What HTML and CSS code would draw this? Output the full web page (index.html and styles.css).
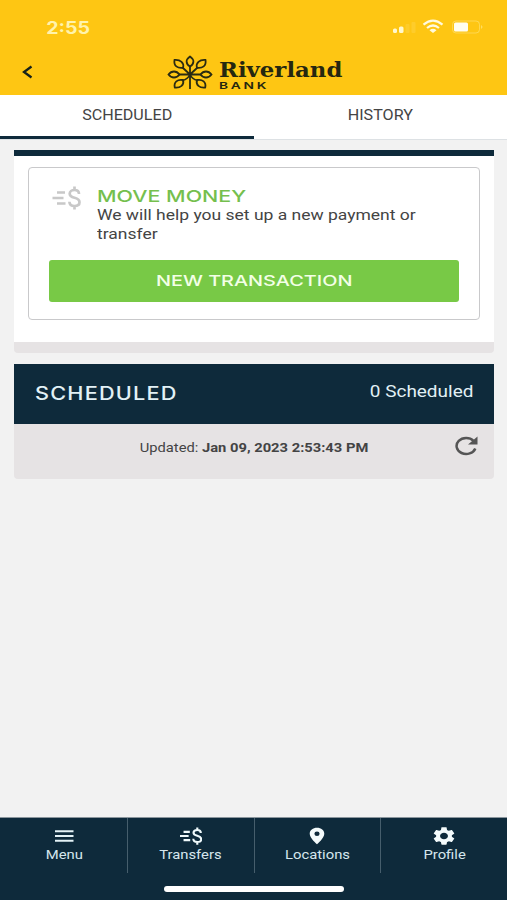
FILE: index.html
```html
<!DOCTYPE html>
<html lang="en">
<head>
<meta charset="utf-8">
<title>Riverland Bank</title>
<link rel="stylesheet" href="styles.css">
</head>
<body>
<svg width="0" height="0" class="defs" aria-hidden="true">
  <symbol id="transfer" viewBox="0 0 28 24">
    <path d="M4.500 6.500H12.500M0 12H11M4.500 17.500H13M26.500 8C26.500 5.300 24.700 4 22 4C19.200 4 17.200 5.500 17.200 7.700C17.200 10 19 11 22 11.800C25 12.600 27 13.700 27 16.200C27 18.600 25 20 22 20C19 20 17 18.500 16.900 15.700M22 .500V4M22 20V23.500" fill="none" stroke="currentColor" stroke-width="2.700"/>
  </symbol>
</svg>
<div class="app">
  <header class="header">
    <div class="status">
      <span class="time"><span class="wide">2:55</span></span>
      <svg class="signals" width="92" height="16" viewBox="0 0 92 16">
        <g fill="#fff8cf"><rect x="1" y="9.500" width="4" height="4.500" rx="1.500"/><rect x="7" y="7.500" width="4.500" height="6.500" rx="1.500"/></g>
        <g fill="#fff8cf" opacity=".13"><rect x="13.500" y="5" width="4" height="9" rx="1"/><rect x="19.500" y="3" width="4" height="11" rx="1"/></g>
        <g fill="none" stroke="#fffadf" stroke-width="2.200"><path d="M31.500 5.700Q41-2.300 50.500 5.700M35 9Q41 4 47 9"/></g>
        <path d="M37.500 11.200Q41 8.500 44.500 11.200L41 14Z" fill="#fffadf"/>
        <rect x="60.500" y="2" width="27" height="12" rx="3.500" fill="none" stroke="#fff3ac" opacity=".4"/>
        <rect x="62" y="3.500" width="14" height="9" rx="1.500" fill="#fffdf0"/>
        <path d="M89 6Q92 8 89 10Z" fill="#fff3ac" opacity=".5"/>
      </svg>
    </div>
    <div class="brandbar">
      <svg class="back" width="12" height="14" viewBox="0 0 12 14"><path d="M10.500 1.500L3 7L10.500 12.500" fill="none" stroke="#17221a" stroke-width="2.300"/></svg>
      <div class="brand">
        <svg width="46" height="35" viewBox="0 0 46 35" fill="none" stroke="#2a2b12" stroke-width="1.800">
          <path d="M23 11V34M12 19.500H34M23 19.500L15.500 12.500M23 19.500L30.500 12.500M15.500 25.500Q21 24 23 19.500Q25 24 30.500 25.500"/>
          <path d="M23 1.500C28 5 27 9 23 11.500C19 9 18 5 23 1.500Z"/>
          <path d="M1.500 19.500C4.500 15.500 9.500 15.500 12.500 19.500C9.500 23.500 4.500 23.500 1.500 19.500ZM44.500 19.500C41.500 15.500 36.500 15.500 33.500 19.500C36.500 23.500 41.500 23.500 44.500 19.500Z"/>
          <path d="M7.500 5C6.500 11 10.500 13.500 16 12.800C17.500 8 13.500 4.500 7.500 5ZM38.500 5C39.500 11 35.500 13.500 30 12.800C28.500 8 32.500 4.500 38.500 5Z"/>
          <path d="M7.800 32.500C6.500 27 10.500 24 16 25C17.500 30 13.500 33 7.800 32.500ZM38.200 32.500C39.500 27 35.500 24 30 25C28.500 30 32.500 33 38.200 32.500Z"/>
        </svg>
        <div class="wordmark">
          <span class="river">Riverland</span>
          <span class="bank">BANK</span>
        </div>
      </div>
    </div>
  </header>
  <nav class="tabs">
    <div class="tab active"><span class="wide">SCHEDULED</span></div>
    <div class="tab"><span class="wide">HISTORY</span></div>
  </nav>
  <main class="main">
    <section class="card move">
      <div class="panel">
        <div class="intro">
          <svg class="moneyicon" width="29" height="24"><use href="#transfer"/></svg>
          <div>
            <h2 class="title">MOVE MONEY</h2>
            <p class="desc">We will help you set up a new payment or<br>transfer</p>
          </div>
        </div>
        <button class="cta"><span>NEW TRANSACTION</span></button>
      </div>
    </section>
    <section class="card scheduled">
      <div class="cardhead"><h2>SCHEDULED</h2><span class="count">0 Scheduled</span></div>
      <div class="cardfoot">
        <span class="updated">Updated: <b>Jan 09, 2023 2:53:43 PM</b></span>
        <svg class="refresh" width="24" height="20" viewBox="0 0 24 20"><path d="M19.500 4.800A9.600 8 0 1 0 21.300 12.500" fill="none" stroke="#555" stroke-width="2.500"/><path d="M23.500 .500V8.500H14Z" fill="#555"/></svg>
      </div>
    </section>
  </main>
  <footer class="bottom">
    <div class="items">
      <div class="item"><svg width="20" height="18" viewBox="0 0 20 18"><path d="M1 4.200H19.500M1 9H19.500M1 13.800H19.500" stroke="#e4f2f6" stroke-width="2"/></svg><span class="wide">Menu</span></div>
      <div class="item"><svg width="22" height="18" viewBox="0 0 28 24" preserveAspectRatio="none"><use href="#transfer" width="28" height="24"/></svg><span class="wide">Transfers</span></div>
      <div class="item"><svg width="16" height="18" viewBox="0 0 16 18"><path fill-rule="evenodd" d="M8 .800C3.900.800.700 3.300.700 6.800C.700 11.200 8 17.300 8 17.300S15.300 11.200 15.300 6.800C15.300 3.300 12.100.800 8 .800ZM8 4.500A2.600 2.200 0 1 1 8 8.900A2.600 2.200 0 1 1 8 4.500Z" fill="#f4fbfc"/></svg><span class="wide">Locations</span></div>
      <div class="item"><svg width="22" height="18" viewBox="2 2 20 20" preserveAspectRatio="none"><path fill="#f4fbfc" d="M19.140 12.940c.040-.300.060-.610.060-.940 0-.320-.020-.640-.070-.940l2.030-1.580c.180-.140.230-.410.120-.610l-1.920-3.320c-.120-.220-.370-.290-.590-.220l-2.390.960c-.500-.380-1.030-.700-1.620-.940l-.360-2.540c-.040-.240-.240-.410-.480-.410h-3.840c-.240 0-.430.170-.470.410l-.360 2.540c-.590.240-1.130.570-1.620.940l-2.390-.960c-.220-.080-.470 0-.590.220L2.740 8.870c-.120.210-.080.470.120.610l2.030 1.580c-.050.300-.090.630-.090.940s.020.640.070.940l-2.030 1.580c-.180.140-.230.410-.120.610l1.920 3.320c.120.220.370.290.590.220l2.390-.960c.500.380 1.030.700 1.620.940l.360 2.540c.050.240.240.410.480.410h3.840c.240 0 .440-.170.470-.410l.360-2.540c.590-.240 1.130-.560 1.620-.940l2.390.960c.220.080.470 0 .590-.220l1.920-3.320c.120-.220.070-.470-.120-.610l-2.010-1.580zM12 15.600c-1.980 0-3.600-1.620-3.600-3.600s1.620-3.600 3.600-3.600 3.600 1.620 3.600 3.600-1.620 3.600-3.600 3.600z"/></svg><span class="wide">Profile</span></div>
    </div>
    <div class="homebar"></div>
  </footer>
</div>
</body>
</html>
```
FILE: styles.css
```css
* { box-sizing: border-box; }
body { margin: 0; font-family: Roboto, "Liberation Sans", sans-serif; background: #f2f2f2; color: #444; }
h2, p { margin: 0; font-weight: 400; }
.defs { display: block; height: 0; }
.app { height: 900px; display: flex; flex-direction: column; overflow: hidden; }
.wide { display: inline-block; transform: scaleX(1.15); }

.header { height: 95px; background: #fec613; flex: none; }
.status { height: 50px; display: flex; justify-content: space-between; padding: 19px 23px 0 49px; }
.time { font: 700 17px/18px Inter, sans-serif; color: #fff3ac; }
.brandbar { display: flex; padding: 5px 0 0 21px; }
.back { margin-top: 10px; }
.brand { display: flex; margin-left: 134px; }
.wordmark { display: flex; flex-direction: column; margin-left: 6px; color: #252710; }
.river { font: 700 20px/22px "DejaVu Serif", serif; padding-top: 4px; transform: scaleX(1.14); transform-origin: 0 0; }
.bank { font: 600 9.500px/10px Inter, sans-serif; letter-spacing: 1.900px; transform: scaleX(1.45); transform-origin: 0 0; }

.tabs { height: 45px; flex: none; display: flex; background: #fff; border-bottom: 1px solid #dde1e4; }
.tab { flex: 1; display: flex; justify-content: center; font-size: 14px; line-height: 40px; color: #444; height: 44px; }
.active { border-bottom: 3px solid #0e2a3b; }

.main { flex: 1; padding: 10px 13px 0 14px; }
.move { height: 203px; padding: 11px 14px 0; background: #fff; border-top: 6px solid #0e2a3b; border-bottom: 11px solid #e6e3e4; border-radius: 0 0 4px 4px; }
.panel { height: 153px; border: 1px solid #c9c9cb; border-radius: 4px; padding: 18px 20px 0; }
.intro { display: flex; height: 74px; }
.moneyicon { margin: 0 16px 0 3px; color: #c8c8c8; flex: none; }
.title { font: 500 16px/20px Inter, sans-serif; color: #75bf4e; white-space: nowrap; transform: scaleX(1.34); transform-origin: 0 0; }
.desc { font-size: 15px; line-height: 19px; white-space: nowrap; transform: scaleX(1.166); transform-origin: 0 0; }
.cta { width: 100%; height: 42px; border: 0; border-radius: 3px; background: #78c946; color: #f3ffe6; font: 500 15px/42px Inter, sans-serif; padding: 0; display: block; }
.cta span { display: inline-block; transform: scaleX(1.325); }

.scheduled { margin-top: 11px; }
.cardhead { height: 60px; background: #0e2a3b; display: flex; justify-content: space-between; padding: 0 21px; color: #e2f1f6; }
.cardhead h2 { font: 500 18px/59px Inter, sans-serif; letter-spacing: 1px; transform: scaleX(1.205); transform-origin: 0 0; }
.count { font-size: 16px; line-height: 55px; transform: scaleX(1.185); transform-origin: 100% 0; }
.cardfoot { height: 55px; background: #e6e3e4; border-radius: 0 0 4px 4px; display: grid; grid-template-columns: 40px 1fr 40px; }
.updated { grid-column: 2; text-align: center; font-size: 13px; line-height: 47px; transform: scaleX(1.133); }
.updated b { font-weight: 700; }
.refresh { margin-top: 12px; }

.bottom { height: 83px; background: #0e2a3b; border-top: 1px solid #8b969d; color: #d5e6ed; }
.items { display: flex; height: 55px; padding-left: 1px; }
.item { flex: 1; display: flex; flex-direction: column; align-items: center; padding-top: 9px; font-size: 13px; line-height: 20px; border-right: 1px solid #465e6c; }
.item:last-child { border: 0; }
.item svg { color: #f0fafc; }
.item .wide { transform: scaleX(1.14); }
.homebar { width: 180px; height: 6px; margin: 13px auto 0; border-radius: 3px; background: #fff; }
```
